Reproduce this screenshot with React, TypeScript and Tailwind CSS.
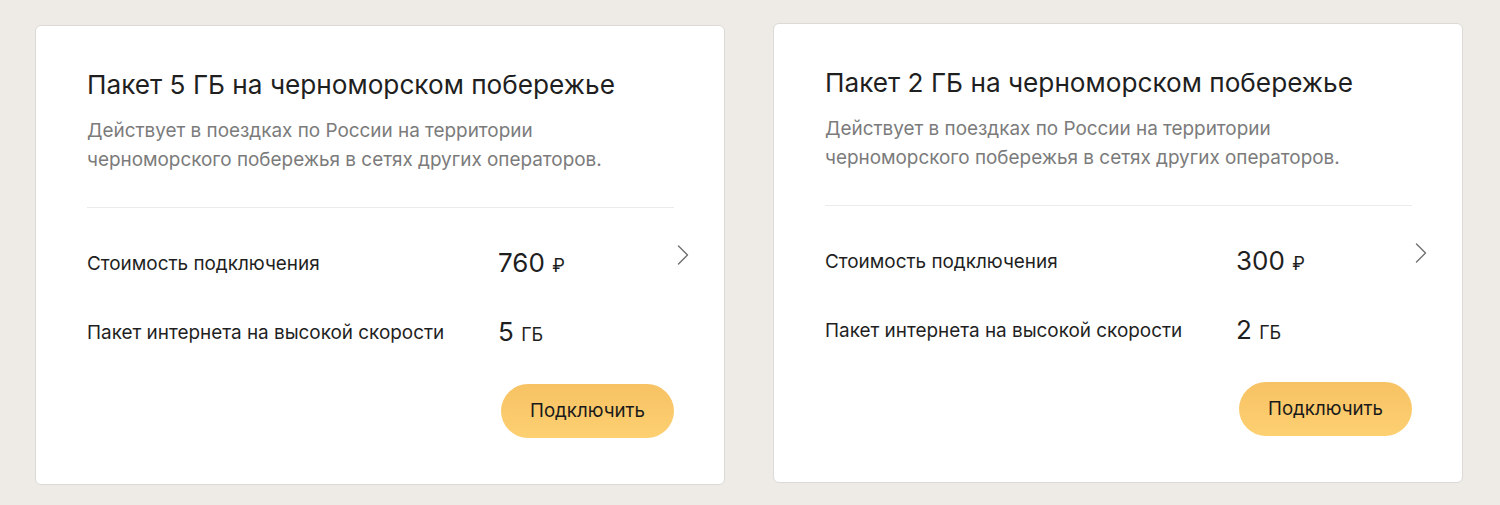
import { ChevronRight } from "lucide-react";

interface Offer {
  gb: number;
  price: number;
  shift: string;
}

const OFFERS: Offer[] = [
  { gb: 5, price: 760, shift: "mt-[2px]" },
  { gb: 2, price: 300, shift: "mt-0" },
];

function OfferCard({ gb, price, shift }: Offer) {
  return (
    <div
      className={`relative flex h-[460px] w-[690px] flex-shrink-0 flex-col rounded-[6px] border border-[#dcdad6] bg-white pl-[51px] pr-[50px] pt-[43px] ${shift}`}
    >
      <h2 className="text-[26.2px] leading-[32px] text-[#1f1f1f]">
        Пакет {gb} ГБ на черноморском побережье
      </h2>
      <p className="mt-[15px] text-[18.9px] leading-[29px] text-[#7b7b7b]">
        Действует в поездках по России на территории
        <br />
        черноморского побережья в сетях других операторов.
      </p>
      <div className="mt-[33px] h-px bg-[#ebebeb]" />

      <div className="mt-[39px] flex items-center">
        <span className="w-[411px] text-[18.9px] text-[#1f1f1f]">Стоимость подключения</span>
        <span className="text-[26px] leading-[32px] text-[#1f1f1f]">
          {price} <span className="text-[18px]">₽</span>
        </span>
      </div>
      <ChevronRight
        size={36}
        strokeWidth={0.9}
        className="absolute right-[23px] top-[211px] text-[#6f6f6f]"
      />

      <div className="mt-[34px] flex items-center">
        <span className="w-[411px] text-[18.9px] text-[#1f1f1f]">
          Пакет интернета на высокой скорости
        </span>
        <span className="text-[26px] leading-[32px] text-[#1f1f1f]">
          {gb} <span className="text-[18px]">ГБ</span>
        </span>
      </div>

      <div className="mt-[33px] flex justify-end">
        <button className="h-[54px] w-[173px] rounded-full bg-gradient-to-b from-[#f7c263] to-[#fdd072] text-[18.7px] text-[#1a1a1a]">
          Подключить
        </button>
      </div>
    </div>
  );
}

export default function App() {
  return (
    <div
      className="flex h-[505px] w-[1500px] items-start gap-[48px] bg-[#eeebe6] pl-[35px] pt-[23px]"
      style={{ fontFamily: "Inter, 'Noto Sans', sans-serif" }}
    >
      {OFFERS.map((o) => (
        <OfferCard key={o.gb} {...o} />
      ))}
    </div>
  );
}
